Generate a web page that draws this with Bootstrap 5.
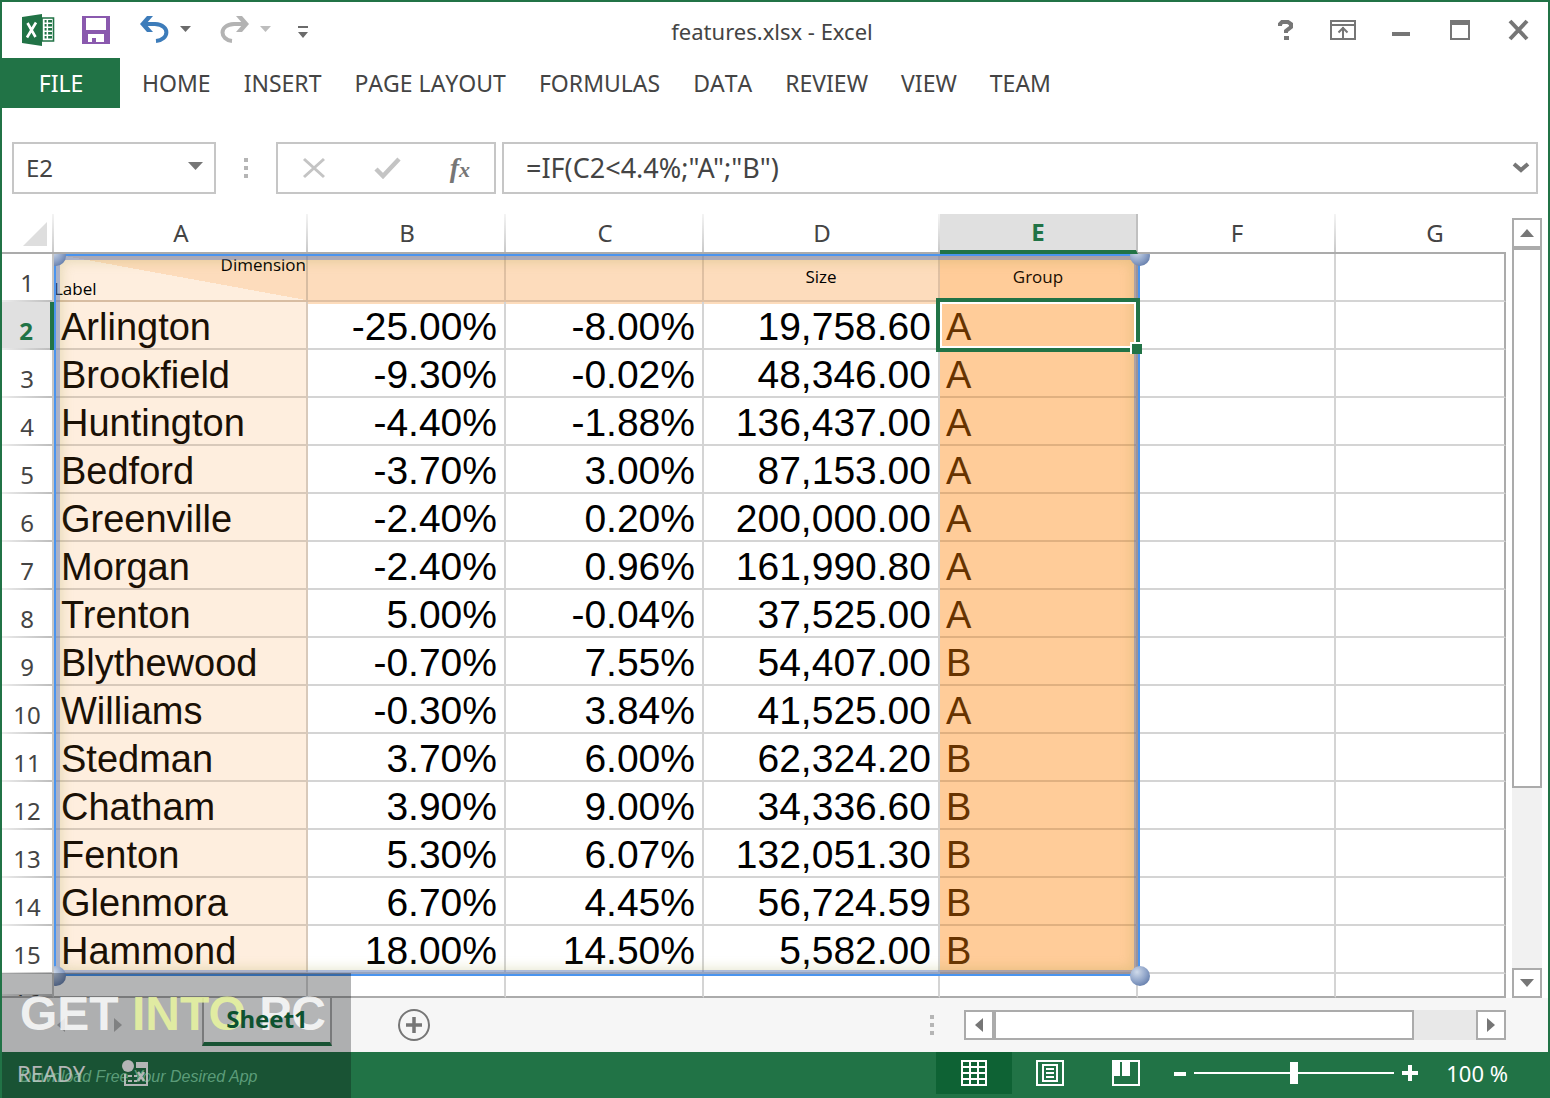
<!DOCTYPE html>
<html lang="en">
<head>
<meta charset="utf-8">
<meta name="viewport" content="width=device-width, initial-scale=1">
<title>features.xlsx - Excel</title>
<link rel="stylesheet" href="https://cdn.jsdelivr.net/npm/bootstrap@5.3.0/dist/css/bootstrap.min.css">
<style>
:root{--xl:#217346;--line:#d4d4d4;--edge:#ababab;--ico:#767676}
body{font-family:"Noto Sans","Open Sans",sans-serif;font-size:24px;line-height:34px;color:#444;background:#fff}
button{background:none;border:0;padding:0;color:inherit;line-height:inherit}
svg{display:block}
.app-window{border:2px solid var(--xl);border-bottom:0;min-height:100vh}
.title-bar{height:56px;padding:0 16px 0 20px}
.doc-title{font-size:22px;left:0;right:0;top:12px;pointer-events:none;margin-right:6px}
.quick-tools>*{height:32px}
.ribbon{height:50px;font-size:23px;font-kerning:none}
.ribbon a{color:#444;text-decoration:none;line-height:50px}
.ribbon .file-tab{background:var(--xl);color:#fff;width:118px;margin-right:22px}
.ribbon-tabs{gap:33px}
.formula-row{padding:34px 10px 20px}
.boxed{border:2px solid #c6c6c6;height:52px}
.boxed input{border:0;outline:0;background:none;min-width:0;color:#444;padding:0}
.name-box{width:204px;padding:0 10px 0 12px}
.fx-box{width:220px;padding:0 24px}
.formula-box{margin-left:6px;padding:0 6px 0 22px}
.formula-box input{font-size:27px}
.fx{font:italic bold 28px "Liberation Serif",serif;color:var(--ico)}
.fx small{font-size:22px}
.drag-dots{width:4px;height:20px;background:repeating-linear-gradient(#b5b5b5 0 4px,transparent 4px 8px)}
.formula-row .drag-dots{margin:0 28px}
.sheet-table{table-layout:fixed;width:100%;border-collapse:separate;border-spacing:0}
.sheet-table th,.sheet-table td{padding:0;font-weight:400;height:48px;border-right:2px solid var(--line);border-bottom:2px solid var(--line);white-space:nowrap;vertical-align:top}
.sheet-table thead th{height:40px;line-height:38px;text-align:center;border-bottom-color:var(--edge);border-right:0;background:linear-gradient(#f4f4f4,#c9c9c9) right/2px 100% no-repeat}
.sheet-table thead th.active-col{background:#e0e0e0;color:var(--xl);font-weight:700;border-bottom:4px solid var(--xl);line-height:36px;border-right:2px solid #c0c0c0}
.sheet-table thead th.last-col{background:none;padding-left:28px}
.sheet-table thead th.corner svg{margin:8px 0 0 20px}
.sheet-table tbody th{text-align:center;padding-top:12px;border-right-color:#c4c4c4;border-bottom:0;background:linear-gradient(90deg,#ececec,#bdbdbd) bottom/100% 2px no-repeat}
.sheet-table tbody th.active-row{background-color:#e0e0e0;color:var(--xl);font-weight:700;border-right:4px solid var(--xl)}
.sheet-table tbody td{font-family:"Liberation Sans",sans-serif;font-size:39px;line-height:42px;padding-top:4px;color:#000}
.sheet-table td:last-child{border-right-color:var(--edge)}
.sheet-table .num{text-align:right;padding-right:7px}
.sheet-table .lbl{font-size:38px;padding-left:7px;background:#feeede;color:#1a1005;border-color:#d8c9ba}
.sheet-table .grp{font-size:38px;padding-left:6px;background:#fc9;color:#663300;border-color:#e0b080}
.sheet-table .band td{padding-top:12px;font-family:"Open Sans","Noto Sans",sans-serif;font-size:17px;line-height:22px;text-align:center;color:#000}
.sheet-table .band .hd{background:#fddcbc;border-color:#dfc0a3}
.sheet-table .band .grp{padding-left:0;color:#1a0d00}
.sheet-table .band .split-cell{padding:0;background:linear-gradient(to top right,#feeede 50%,#fddcbc 50%);border-color:#d8bda2}
.sheet-table .under-band{box-shadow:inset 0 2px #fddcbc}
.split-inner{height:46px}
.sheet-table .tail th,.sheet-table .tail td{height:24px;padding:0;border-bottom:2px solid var(--edge)}
.tail-clip{height:22px;overflow:hidden;padding-top:12px}
.overlay-clip{left:52px;top:40px;right:0;bottom:0;overflow:hidden;pointer-events:none}
.range-frame{left:0;top:0;width:1086px;height:722px;border:2px solid #4a94ee;box-shadow:inset 0 0 0 4px rgba(80,115,205,.42),inset 0 0 12px 6px rgba(150,150,50,.22)}
.knob{width:20px;height:20px;border-radius:50%;background:radial-gradient(circle at 35% 30%,#cfdaea,#8ea3c8 50%,#4a6699)}
.knob.tl{left:-10px;top:-10px}.knob.tr{right:-12px;top:-10px}.knob.bl{left:-10px;bottom:-12px}.knob.br{right:-12px;bottom:-12px}
.cell-cursor{left:882px;top:44px;width:204px;height:54px;border:4px solid var(--xl);box-shadow:inset 0 0 0 2px #fff}
.cell-cursor i{right:-6px;bottom:-6px;width:12px;height:12px;background:var(--xl);border:2px solid #fff;border-right:0;border-bottom:0}
.v-scroll{width:30px;margin:4px 6px 0;background:#f1f1f1}
.scroll-end{width:30px;height:30px;border:2px solid var(--edge);background:#fff;flex:none}
.v-thumb{height:542px;margin-top:-2px;border:2px solid var(--edge);border-top-width:4px;background:#fff}
.h-scroll{width:542px;background:#e8e8e8}
.h-thumb{width:422px;margin-left:-2px;height:30px;border:2px solid var(--edge);border-left-width:4px;background:#fff}
.sheet-bar{height:54px;background:#f6f6f6;padding-right:42px}
.sheet-nav{width:200px;padding-left:55px;gap:49px}
.add-sheet{margin-left:66px}
.sheet-bar .drag-dots{margin-right:30px}
.sheet-tab{width:130px;height:50px;margin-top:-2px;border:solid var(--edge);border-width:0 2px;border-bottom:4px solid var(--xl);background:#fff;font-size:24px;font-weight:700;color:#0d5230}
.sheet-tab span{position:relative;z-index:6}
.status-bar{height:46px;background:var(--xl);color:#fff;font-size:22px;padding:0 40px 4px 15px}
.status-left{gap:36px}
.view-btn{width:76px;height:42px}
.view-btn.on{background:#0e6234}
.zoom-out{margin-left:10px}
.zoom-label{margin-left:28px}
.zoom-range{appearance:none;-webkit-appearance:none;width:200px;height:22px;background:linear-gradient(#fff,#fff) center/100% 2px no-repeat;margin:0 8px}
.zoom-range::-webkit-slider-thumb{-webkit-appearance:none;width:8px;height:22px;background:#fff}
.zoom-range::-moz-range-thumb{width:8px;height:22px;background:#fff;border:0;border-radius:0}
.stamp{left:0;bottom:0;width:349px;height:125px;background:rgba(8,10,14,.3);z-index:5;padding:17px 0 0 18px;font-family:"Liberation Sans",sans-serif;pointer-events:none}
.stamp-name{font-size:48px;line-height:48px;font-weight:700;color:rgba(255,255,255,.84);white-space:nowrap}
.stamp-name em{font-style:normal;color:rgba(232,244,160,.88)}
.stamp-line{font-size:16px;line-height:20px;font-style:italic;color:rgba(150,220,180,.55);margin-top:29px}
</style>
<script src="https://cdn.jsdelivr.net/npm/bootstrap@5.3.0/dist/js/bootstrap.bundle.min.js"></script>
</head>
<body>
<div class="app-window d-flex flex-column position-relative">
  <header class="title-bar d-flex align-items-center justify-content-between position-relative">
    <div class="quick-tools d-flex align-items-center">
      <svg width="60" height="32" viewBox="0 0 60 32"><path d="M20 4h11.500v23H20z" fill="#fff" stroke="#217346" stroke-width="1.600"/><path d="M21 6h9v2.500h-9zm0 4h9v2.500h-9zm0 4h9v2.500h-9zm0 4h9v2.500h-9zm0 4h9v2.500h-9z" fill="#217346"/><path d="M21 5h1.600v20H21zm3.600 0h1.500v20h-1.500z" fill="#fff"/><path d="M0 3 20 0v32L0 29z" fill="#217346"/><path d="M5.500 9l8 14M14 8.500l-9 15" stroke="#fff" stroke-width="2.600"/></svg>
      <button aria-label="Save"><svg width="58" height="32" viewBox="0 0 58 32"><path d="M0 2h28v28H0z" fill="#8a59ae"/><path d="M4 4h20v12H4zM6 20h16v8h-8v-4h-4v4H6z" fill="#fff"/></svg></button>
      <button aria-label="Undo"><svg width="40" height="32" viewBox="0 0 40 32"><path d="M2 10h13c16 1 14 16 1 17" fill="none" stroke="#3d7cba" stroke-width="4"/><path d="M7 2h6L6 10l7 8H7L0 10z" fill="#3d7cba"/></svg></button>
      <button aria-label="Undo list"><svg width="40" height="32" viewBox="0 0 40 32"><path d="M0 12h11l-5.500 6z" fill="#6b6b6b"/></svg></button>
      <button aria-label="Redo"><svg width="40" height="32" viewBox="0 0 40 32"><path d="M27 10H14C-2 11 0 26 12 27" fill="none" stroke="#b3b3b3" stroke-width="4"/><path d="M22 2h-6l7 8-7 8h6l7-8z" fill="#b3b3b3"/></svg></button>
      <button aria-label="Redo list"><svg width="38" height="32" viewBox="0 0 38 32"><path d="M0 12h11l-5.500 6z" fill="#bdbdbd"/></svg></button>
      <button aria-label="Customize toolbar"><svg width="12" height="32" viewBox="0 0 12 32"><path d="M0 12h10v2H0zM0 18h10l-5 6z" fill="#6b6b6b"/></svg></button>
    </div>
    <div class="doc-title position-absolute text-center">features.xlsx - Excel</div>
    <div class="d-flex align-items-center">
      <button aria-label="Help"><svg width="52" height="22" viewBox="0 0 52 22"><path d="M2 7V5l2-2h6l3 2v3l-5 4v2M6 19h5" fill="none" stroke="#767676" stroke-width="4"/></svg></button>
      <button aria-label="Ribbon display"><svg width="62" height="22" viewBox="0 0 62 22"><path d="M1 2h24v18H1zM1 6h24M13 19V8M8.500 13.500 13 9l4.500 4.500" fill="none" stroke="#767676" stroke-width="2"/></svg></button>
      <button aria-label="Minimize"><svg width="58" height="22" viewBox="0 0 58 22"><path d="M0 13h18v4H0z" fill="#767676"/></svg></button>
      <button aria-label="Maximize"><svg width="58" height="22" viewBox="0 0 58 22"><path d="M1 2h18v18H1zM1 4h18" fill="none" stroke="#767676" stroke-width="2"/><path d="M0 1h20v5H0z" fill="#767676"/></svg></button>
      <button aria-label="Close"><svg width="24" height="22" viewBox="0 0 24 22"><path d="M2 2 19 20M19 2 2 20" stroke="#767676" stroke-width="4"/></svg></button>
    </div>
  </header>
  <nav class="ribbon d-flex">
    <a href="#" class="file-tab text-center">FILE</a>
    <div class="ribbon-tabs d-flex">
      <a href="#">HOME</a><a href="#">INSERT</a><a href="#">PAGE LAYOUT</a><a href="#">FORMULAS</a><a href="#">DATA</a><a href="#">REVIEW</a><a href="#">VIEW</a><a href="#">TEAM</a>
    </div>
  </nav>
  <div class="formula-row d-flex align-items-center">
    <div class="name-box boxed d-flex align-items-center">
      <input class="flex-grow-1" aria-label="Name box" value="E2">
      <button aria-label="Names"><svg width="16" height="12" viewBox="0 0 16 12"><path d="M0 0h15L7.500 8z" fill="#767676"/></svg></button>
    </div>
    <div class="drag-dots"></div>
    <div class="fx-box boxed d-flex align-items-center justify-content-between">
      <button aria-label="Cancel"><svg width="24" height="22" viewBox="0 0 24 22"><path d="M2 2 22 20M22 2 2 20" stroke="#c4c4c4" stroke-width="3"/></svg></button>
      <button aria-label="Enter"><svg width="28" height="22" viewBox="0 0 28 22"><path d="M2 12l7 7L25 2" fill="none" stroke="#c4c4c4" stroke-width="4.500"/></svg></button>
      <button class="fx" aria-label="Insert function">f<small>x</small></button>
    </div>
    <div class="formula-box boxed d-flex align-items-center flex-grow-1">
      <input class="flex-grow-1" aria-label="Formula" value="=IF(C2&lt;4.4%;&quot;A&quot;;&quot;B&quot;)">
      <button aria-label="Expand"><svg width="18" height="12" viewBox="0 0 18 12"><path d="M2 2l7 6 7-6" fill="none" stroke="#767676" stroke-width="4"/></svg></button>
    </div>
  </div>
  <main class="d-flex">
    <div class="position-relative flex-grow-1">
      <table class="sheet-table">
        <colgroup><col style="width:52px"><col style="width:254px"><col style="width:198px"><col style="width:198px"><col style="width:236px"><col style="width:198px"><col style="width:198px"><col></colgroup>
        <thead><tr><th class="corner"><svg width="26" height="24" viewBox="0 0 26 24"><path d="M25 0v24H1z" fill="#dedede"/></svg></th><th>A</th><th>B</th><th>C</th><th>D</th><th class="active-col">E</th><th>F</th><th class="last-col">G</th></tr></thead>
        <tbody>
          <tr class="band"><th>1</th><td class="split-cell"><div class="split-inner d-flex flex-column justify-content-between"><span class="text-end">Dimension</span><span class="text-start">Label</span></div></td><td class="hd"></td><td class="hd"></td><td class="hd">Size</td><td class="grp">Group</td><td></td><td></td></tr>
          <tr><th class="active-row">2</th><td class="lbl">Arlington</td><td class="num under-band">-25.00%</td><td class="num under-band">-8.00%</td><td class="num under-band">19,758.60</td><td class="grp">A</td><td></td><td></td></tr>
          <tr><th>3</th><td class="lbl">Brookfield</td><td class="num">-9.30%</td><td class="num">-0.02%</td><td class="num">48,346.00</td><td class="grp">A</td><td></td><td></td></tr>
          <tr><th>4</th><td class="lbl">Huntington</td><td class="num">-4.40%</td><td class="num">-1.88%</td><td class="num">136,437.00</td><td class="grp">A</td><td></td><td></td></tr>
          <tr><th>5</th><td class="lbl">Bedford</td><td class="num">-3.70%</td><td class="num">3.00%</td><td class="num">87,153.00</td><td class="grp">A</td><td></td><td></td></tr>
          <tr><th>6</th><td class="lbl">Greenville</td><td class="num">-2.40%</td><td class="num">0.20%</td><td class="num">200,000.00</td><td class="grp">A</td><td></td><td></td></tr>
          <tr><th>7</th><td class="lbl">Morgan</td><td class="num">-2.40%</td><td class="num">0.96%</td><td class="num">161,990.80</td><td class="grp">A</td><td></td><td></td></tr>
          <tr><th>8</th><td class="lbl">Trenton</td><td class="num">5.00%</td><td class="num">-0.04%</td><td class="num">37,525.00</td><td class="grp">A</td><td></td><td></td></tr>
          <tr><th>9</th><td class="lbl">Blythewood</td><td class="num">-0.70%</td><td class="num">7.55%</td><td class="num">54,407.00</td><td class="grp">B</td><td></td><td></td></tr>
          <tr><th>10</th><td class="lbl">Williams</td><td class="num">-0.30%</td><td class="num">3.84%</td><td class="num">41,525.00</td><td class="grp">A</td><td></td><td></td></tr>
          <tr><th>11</th><td class="lbl">Stedman</td><td class="num">3.70%</td><td class="num">6.00%</td><td class="num">62,324.20</td><td class="grp">B</td><td></td><td></td></tr>
          <tr><th>12</th><td class="lbl">Chatham</td><td class="num">3.90%</td><td class="num">9.00%</td><td class="num">34,336.60</td><td class="grp">B</td><td></td><td></td></tr>
          <tr><th>13</th><td class="lbl">Fenton</td><td class="num">5.30%</td><td class="num">6.07%</td><td class="num">132,051.30</td><td class="grp">B</td><td></td><td></td></tr>
          <tr><th>14</th><td class="lbl">Glenmora</td><td class="num">6.70%</td><td class="num">4.45%</td><td class="num">56,724.59</td><td class="grp">B</td><td></td><td></td></tr>
          <tr><th>15</th><td class="lbl">Hammond</td><td class="num">18.00%</td><td class="num">14.50%</td><td class="num">5,582.00</td><td class="grp">B</td><td></td><td></td></tr>
          <tr class="tail"><th><div class="tail-clip">16</div></th><td></td><td></td><td></td><td></td><td></td><td></td><td></td></tr>
        </tbody>
      </table>
      <div class="overlay-clip position-absolute">
        <div class="range-frame position-absolute"><span class="knob tl position-absolute"></span><span class="knob tr position-absolute"></span><span class="knob bl position-absolute"></span><span class="knob br position-absolute"></span></div>
        <div class="cell-cursor position-absolute"><i class="position-absolute"></i></div>
      </div>
    </div>
    <div class="v-scroll d-flex flex-column">
      <button class="scroll-end d-flex align-items-center justify-content-center" aria-label="Scroll up"><svg width="14" height="8" viewBox="0 0 14 8"><path d="M0 8h14L7 0z" fill="#767676"/></svg></button>
      <div class="v-thumb"></div>
      <button class="scroll-end d-flex align-items-center justify-content-center mt-auto" aria-label="Scroll down"><svg width="14" height="8" viewBox="0 0 14 8"><path d="M0 0h14L7 8z" fill="#767676"/></svg></button>
    </div>
  </main>
  <div class="sheet-bar d-flex align-items-center">
    <div class="sheet-nav d-flex">
      <button aria-label="Previous sheet"><svg width="8" height="14" viewBox="0 0 8 14"><path d="M8 0v14L0 7z" fill="#b5b5b5"/></svg></button>
      <button aria-label="Next sheet"><svg width="8" height="14" viewBox="0 0 8 14"><path d="M0 0v14l8-7z" fill="#b5b5b5"/></svg></button>
    </div>
    <button class="sheet-tab align-self-start"><span>Sheet1</span></button>
    <button class="add-sheet" aria-label="New sheet"><svg width="32" height="32" viewBox="0 0 32 32"><circle cx="16" cy="16" r="15" fill="none" stroke="#767676" stroke-width="2"/><path d="M8 16h16M16 8v16" stroke="#767676" stroke-width="3.500"/></svg></button>
    <div class="drag-dots ms-auto"></div>
    <div class="h-scroll d-flex">
      <button class="scroll-end d-flex align-items-center justify-content-center" aria-label="Scroll left"><svg width="8" height="14" viewBox="0 0 8 14"><path d="M8 0v14L0 7z" fill="#767676"/></svg></button>
      <div class="h-thumb"></div>
      <button class="scroll-end d-flex align-items-center justify-content-center ms-auto" aria-label="Scroll right"><svg width="8" height="14" viewBox="0 0 8 14"><path d="M0 0v14l8-7z" fill="#767676"/></svg></button>
    </div>
  </div>
  <footer class="status-bar d-flex align-items-center justify-content-between">
    <div class="status-left d-flex align-items-center">
      <span>READY</span>
      <svg width="28" height="28" viewBox="0 0 28 28"><circle cx="7" cy="7" r="6" fill="#fff"/><path d="M15 3h12v24H3V15h2v10h20V9H15z" fill="#fff"/><path d="M7 17h4m2 0h3M7 22h4m2 0h3" stroke="#fff" stroke-width="2"/><path d="M17 13l6 9M23 13l-6 9" stroke="#fff" stroke-width="2.500"/></svg>
    </div>
    <div class="d-flex align-items-center">
      <button class="view-btn on d-flex align-items-center justify-content-center" aria-label="Normal view"><svg width="26" height="26" viewBox="0 0 26 26"><path d="M1 1h24v24H1zM9 1v24M17 1v24M1 7h24M1 13h24M1 19h24" fill="none" stroke="#fff" stroke-width="2"/></svg></button>
      <button class="view-btn d-flex align-items-center justify-content-center" aria-label="Page layout view"><svg width="28" height="26" viewBox="0 0 28 26"><path d="M1 1h26v24H1zM7 5h14v16H7zM10 9h8M10 13h8M10 17h8" fill="none" stroke="#fff" stroke-width="2"/></svg></button>
      <button class="view-btn d-flex align-items-center justify-content-center" aria-label="Page break view"><svg width="28" height="26" viewBox="0 0 28 26"><path d="M1 1h26v24H1z" fill="none" stroke="#fff" stroke-width="2"/><path d="M2 2h6v14H2zM10 2h8v14h-8z" fill="#fff"/></svg></button>
      <button class="zoom-out" aria-label="Zoom out"><svg width="12" height="16" viewBox="0 0 12 16"><path d="M0 7h12v4H0z" fill="#fff"/></svg></button>
      <input class="zoom-range" type="range" aria-label="Zoom" min="0" max="200" value="100">
      <button aria-label="Zoom in"><svg width="16" height="16" viewBox="0 0 16 16"><path d="M0 6h6V0h4v6h6v4h-6v6H6v-6H0z" fill="#fff"/></svg></button>
      <span class="zoom-label">100 %</span>
    </div>
  </footer>
  <div class="stamp position-absolute">
    <div class="stamp-name">GET <em>INTO</em> PC</div>
    <div class="stamp-line">Download Free Your Desired App</div>
  </div>
</div>
</body>
</html>
